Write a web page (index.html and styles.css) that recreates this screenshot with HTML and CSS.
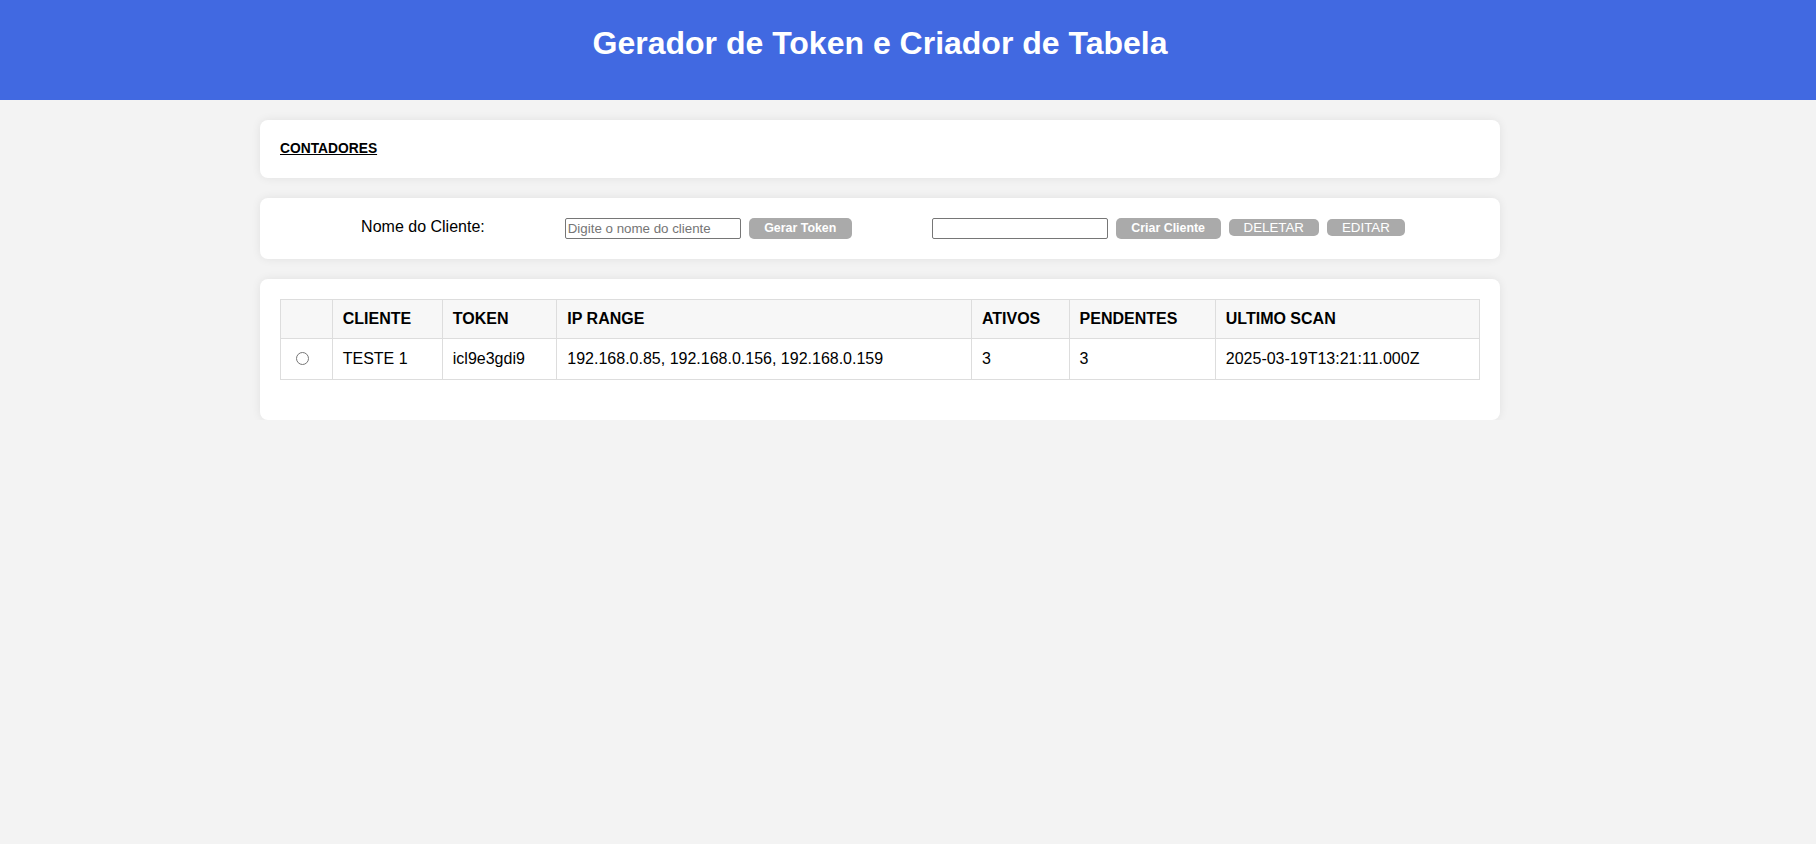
FILE: index.html
```html
<!DOCTYPE html>
<html lang="pt-BR">
<head>
<meta charset="utf-8">
<title>Gerador de Token e Criador de Tabela</title>
<link rel="stylesheet" href="styles.css">
</head>
<body>
<header class="topbar">
  <div class="wrap">
    <h1 class="title">Gerador de Token e Criador de Tabela</h1>
  </div>
</header>
<main class="wrap main">
  <section class="card">
    <div class="counters"><a class="counters-link" href="#">CONTADORES</a></div>
  </section>
  <section class="card">
    <div class="form-row">
      <label class="label" for="nome">Nome do Cliente:</label>
      <div class="group">
        <input class="text-input" id="nome" type="text" placeholder="Digite o nome do cliente">
        <button class="btn btn-strong" type="button">Gerar Token</button>
      </div>
      <div class="group">
        <input class="text-input" type="text">
        <button class="btn btn-strong" type="button">Criar Cliente</button>
        <button class="btn btn-plain" type="button">DELETAR</button>
        <button class="btn btn-plain" type="button">EDITAR</button>
      </div>
    </div>
  </section>
  <section class="card">
    <table class="table">
      <thead>
        <tr>
          <th></th>
          <th>CLIENTE</th>
          <th>TOKEN</th>
          <th>IP RANGE</th>
          <th>ATIVOS</th>
          <th>PENDENTES</th>
          <th>ULTIMO SCAN</th>
        </tr>
      </thead>
      <tbody>
        <tr>
          <td><input class="radio" type="radio" name="sel"></td>
          <td>TESTE 1</td>
          <td>icl9e3gdi9</td>
          <td>192.168.0.85, 192.168.0.156, 192.168.0.159</td>
          <td>3</td>
          <td>3</td>
          <td>2025-03-19T13:21:11.000Z</td>
        </tr>
      </tbody>
    </table>
  </section>
</main>
</body>
</html>
```
FILE: styles.css
```css
* { box-sizing: border-box; }

body {
  margin: 0;
  background: #f3f3f3;
  font-family: "Liberation Sans", Arial, sans-serif;
  font-size: 16px;
  color: #000;
}

.wrap {
  width: 1240px;
  margin-left: 260px;
}

.topbar {
  background: #4169e1;
  height: 100px;
  padding-top: 25px;
}

.title {
  margin: 0;
  text-align: center;
  color: #fff;
  font-size: 32px;
  font-weight: bold;
  line-height: 37px;
}

.main {
  padding-top: 20px;
  display: flex;
  flex-direction: column;
  gap: 20px;
}

.card {
  background: #fff;
  border-radius: 8px;
  padding: 20px;
  box-shadow: 0 0 10px rgba(0, 0, 0, 0.08);
}

.counters {
  font-size: 13.8px;
  line-height: 18px;
  font-weight: bold;
}

.counters-link {
  color: #000;
  text-decoration: underline;
}

.form-row {
  display: flex;
  justify-content: center;
  align-items: center;
  gap: 80px;
  height: 21px;
  padding-left: 6px;
}

.label {
  font-size: 16px;
  line-height: 18px;
  margin-top: -3px;
}

.group {
  display: flex;
  align-items: center;
  gap: 8px;
}

.text-input {
  width: 176px;
  height: 21px;
  padding: 1px 2px;
  border: 1px solid #767676;
  border-radius: 2px;
  font-family: "Liberation Sans", Arial, sans-serif;
  font-size: 13.33px;
  color: #000;
  background: #fff;
}

.text-input::placeholder {
  color: #757575;
}

.btn {
  border: none;
  background: #aaaaaa;
  color: #fff;
  font-family: "Liberation Sans", Arial, sans-serif;
  cursor: pointer;
}

.btn-strong {
  height: 21px;
  line-height: 21px;
  padding: 0 15.5px;
  border-radius: 5px;
  font-size: 12.4px;
  font-weight: bold;
}

.btn-plain {
  height: 17px;
  line-height: 15px;
  padding: 1px 15px;
  margin-top: -2px;
  border-radius: 5px;
  font-size: 13.33px;
  font-weight: normal;
}

.table {
  width: 100%;
  border-collapse: collapse;
  margin-bottom: 20px;
}

.table th,
.table td {
  border: 1px solid #dddddd;
  padding: 10px;
  text-align: left;
  font-size: 16px;
}

.table th {
  background: #f7f7f7;
  font-weight: bold;
}

.radio {
  margin: 3px 3px 0 5px;
}
```
